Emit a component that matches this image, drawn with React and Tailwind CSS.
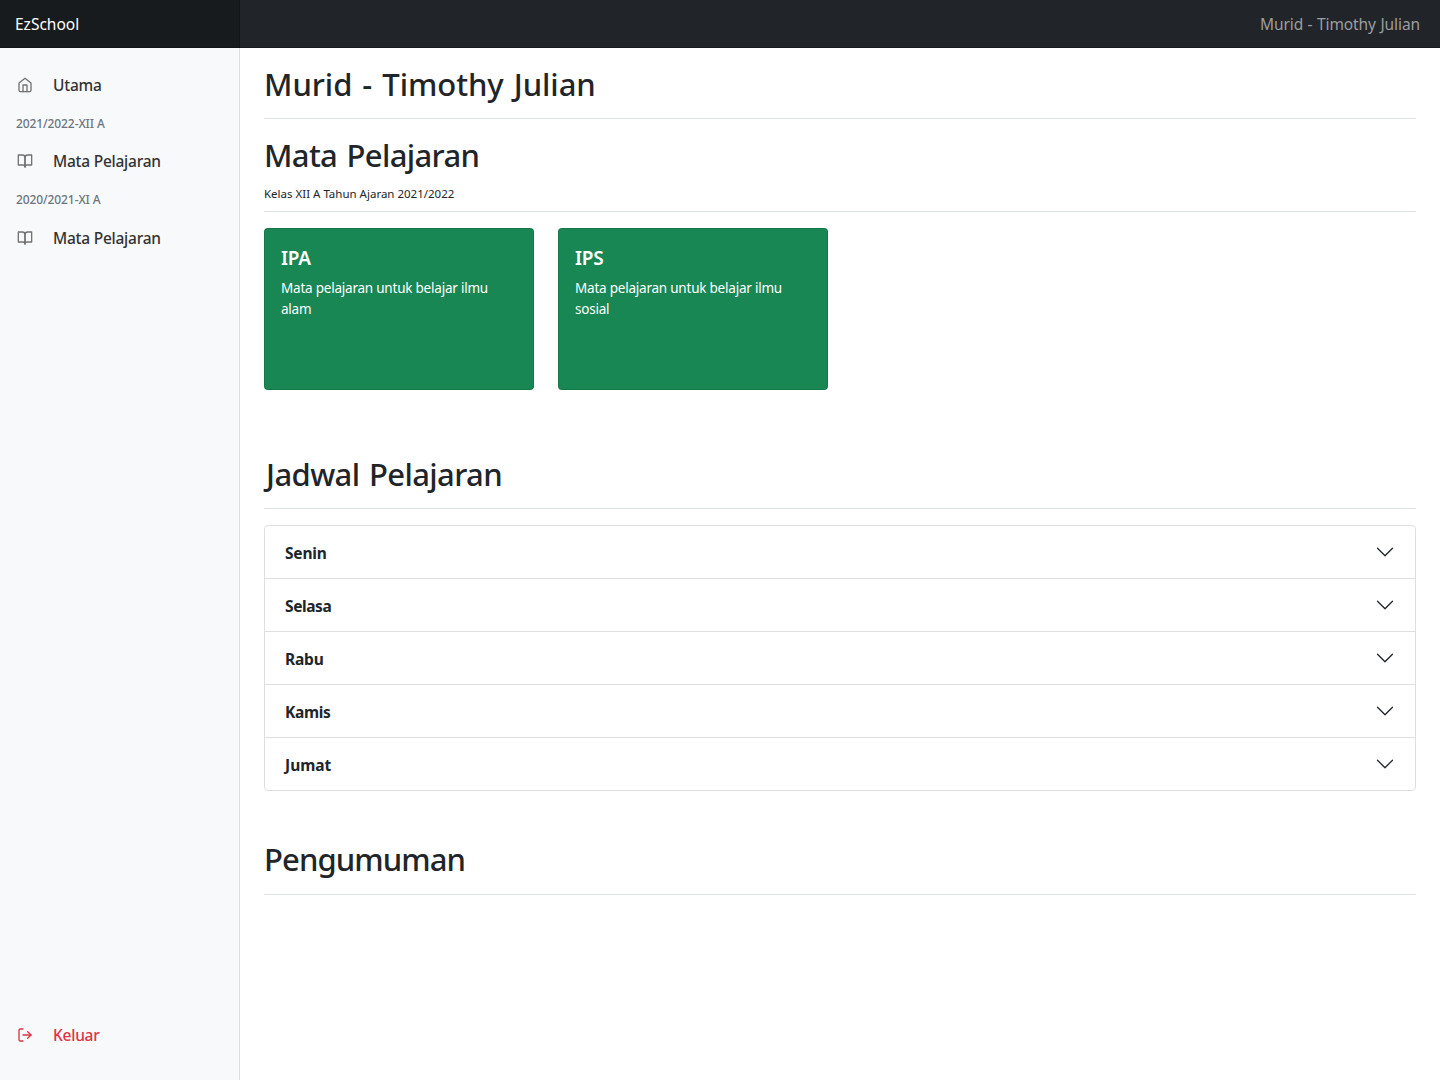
import React from "react";
import { FiBookOpen, FiHome, FiLogOut } from "react-icons/fi";
import { BsChevronDown } from "react-icons/bs";

const subjects = [
  { name: "IPA", text: "Mata pelajaran untuk belajar ilmu alam" },
  { name: "IPS", text: "Mata pelajaran untuk belajar ilmu sosial" },
];

const days = [
  { name: "Senin", tracking: "tracking-[-0.2px]" },
  { name: "Selasa", tracking: "tracking-[-0.4px]" },
  { name: "Rabu", tracking: "tracking-[-0.2px]" },
  { name: "Kamis", tracking: "tracking-[-0.3px]" },
  { name: "Jumat", tracking: "tracking-normal" },
];

function NavItem({ icon: Icon, children, danger = false, className = "" }) {
  return (
    <a
      href="#"
      className={`flex h-10 items-center gap-5 pl-[17px] text-[15.5px] font-medium tracking-[-0.25px] ${
        danger ? "text-[#dc3545]" : "text-[#333333]"
      } ${className}`}
    >
      <Icon size={16} className={danger ? "text-[#dc3545]" : "text-[#727272]"} />
      <span className="pt-0.5">{children}</span>
    </a>
  );
}

function NavHeading({ children }) {
  return (
    <h6 className="flex h-9 items-center pt-0.5 pl-4 text-[12px] font-medium tracking-[-0.1px] text-[#6c757d]">
      {children}
    </h6>
  );
}

function Title({ children, className = "" }) {
  return <h2 className={`text-[31px] leading-[38px] font-medium [word-spacing:2px] ${className}`}>{children}</h2>;
}

export default function App() {
  return (
    <div className="flex h-[1080px] w-[1440px] flex-col bg-white font-['Noto_Sans',sans-serif] text-[#212529]">
      <header className="flex h-12 shrink-0 items-stretch justify-between bg-[#212529] shadow-[inset_0_-1px_0_rgba(0,0,0,0.25)]">
        <a
          href="#"
          className="flex w-60 items-center bg-black/25 pt-0.5 pl-[15px] text-[15.5px] text-white shadow-[inset_-1px_0_0_rgba(0,0,0,0.25)]"
        >
          EzSchool
        </a>
        <span className="flex items-center pt-0.5 pr-5 text-[15.5px] tracking-[-0.08px] text-[#9b9d9f] [word-spacing:0.5px]">
          Murid - Timothy Julian
        </span>
      </header>

      <div className="flex min-h-0 flex-1">
        <nav className="flex w-60 shrink-0 flex-col bg-[#f8f9fa] pt-[17px] shadow-[inset_-1px_0_0_rgba(0,0,0,0.1)]">
          <NavItem icon={FiHome}>Utama</NavItem>
          <NavHeading>2021/2022-XII A</NavHeading>
          <NavItem icon={FiBookOpen}>Mata Pelajaran</NavItem>
          <NavHeading>2020/2021-XI A</NavHeading>
          <NavItem icon={FiBookOpen} className="mt-px">
            Mata Pelajaran
          </NavItem>
          <NavItem icon={FiLogOut} danger className="mt-auto mb-[25px]">
            Keluar
          </NavItem>
        </nav>

        <main className="flex flex-1 flex-col px-6">
          <div className="flex h-[71px] items-start border-b border-[#dee2e6] pt-[17px]">
            <Title className="tracking-[-0.05px]">Murid - Timothy Julian</Title>
          </div>

          <div className="flex h-[93px] flex-col border-b border-[#dee2e6] pt-[17px]">
            <Title className="tracking-[-0.65px]">Mata Pelajaran</Title>
            <p className="mt-[11px] text-[11.5px] leading-[18px]">Kelas XII A Tahun Ajaran 2021/2022</p>
          </div>

          <div className="mt-4 flex gap-6">
            {subjects.map((s) => (
              <article
                key={s.name}
                className="h-[162px] w-[270px] rounded border border-black/12 bg-[#198754] bg-clip-border px-4 pt-[17px] text-white"
              >
                <h5 className="text-[19px] leading-6 font-semibold tracking-[-0.2px]">{s.name}</h5>
                <p className="mt-2 text-[13.5px] leading-[21px] tracking-[-0.22px]">{s.text}</p>
              </article>
            ))}
          </div>

          <div className="mt-12 flex h-[71px] items-start border-b border-[#dee2e6] pt-[17px]">
            <Title className="pl-0.5 tracking-[-0.6px]">Jadwal Pelajaran</Title>
          </div>

          <div className="mt-4 divide-y divide-[#dfdfdf] rounded border border-[#dfdfdf]">
            {days.map((d) => (
              <button key={d.name} className="flex h-[53px] w-full items-center justify-between px-5 last:h-[52px]">
                <span className={`pt-[3px] text-[15.5px] font-bold ${d.tracking}`}>{d.name}</span>
                <BsChevronDown size={20} />
              </button>
            ))}
          </div>

          <div className="mt-8 flex h-[72px] items-start border-b border-[#dee2e6] pt-[17px]">
            <Title className="tracking-[-0.9px]">Pengumuman</Title>
          </div>
        </main>
      </div>
    </div>
  );
}
